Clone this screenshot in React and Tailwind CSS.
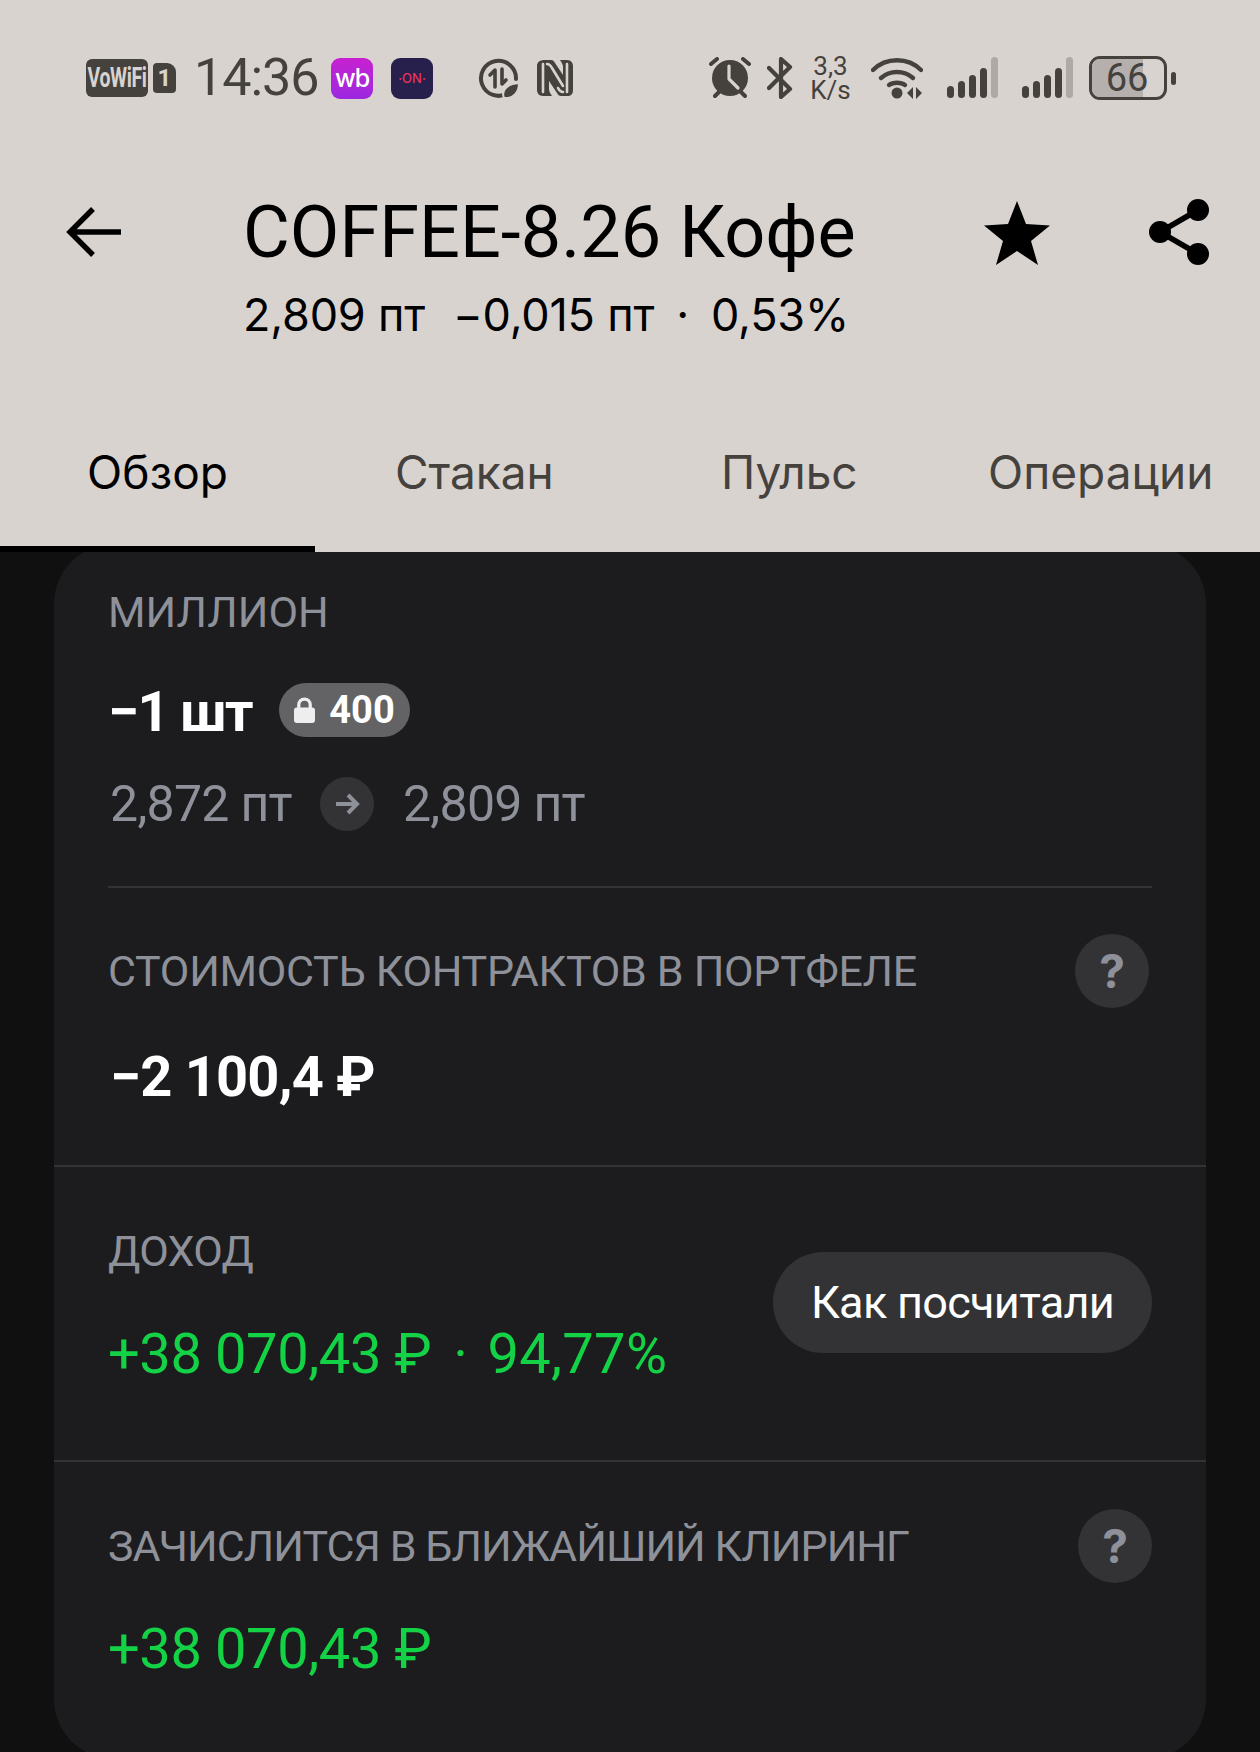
const sans = "font-['Inter','Roboto',sans-serif]";

function VoWiFi() {
  return (
    <div className="flex items-center gap-[5px]">
      <div className="flex h-[38px] w-[62px] items-center justify-center overflow-hidden rounded-[6px] bg-[#45423e]">
        <span className="font-['Roboto',sans-serif] text-[27px] font-bold leading-none tracking-[-0.5px] text-[#d9d3d0] [transform:scaleX(0.72)]">VoWiFi</span>
      </div>
      <div className="flex h-[30px] w-[23px] items-center justify-center rounded-[4px] rounded-tr-[9px] bg-[#45423e]">
        <span className="font-['Roboto',sans-serif] text-[24px] font-bold leading-none text-[#d9d3d0]">1</span>
      </div>
    </div>
  );
}

function DataSaver() {
  return (
    <svg width="42" height="42" viewBox="0 0 42 42" fill="none">
      <path d="M30 36A17.5 17.5 0 1 1 38 22" stroke="#45423e" strokeWidth="4" strokeLinecap="round" />
      <path d="M17 30V13l-5 5" stroke="#45423e" strokeWidth="3.6" strokeLinecap="round" strokeLinejoin="round" />
      <path d="M24 12v15l4-4" stroke="#45423e" strokeWidth="3.6" strokeLinecap="round" strokeLinejoin="round" />
      <path d="M26 41c-3-7 2-14 15-15 0 9-5 16-15 15z" fill="#45423e" stroke="#d9d3d0" strokeWidth="2" />
    </svg>
  );
}

function Nfc() {
  return (
    <svg width="38" height="38" viewBox="0 0 38 38" fill="none">
      <path d="M9 1h6c2 0 3 1 4 3l8 12V8c0-2-1-4-3-7h7c4 0 6 3 6 6v24c0 4-2 6-6 6h-6c-2 0-3-1-4-3l-8-12v8c0 2 1 4 3 7H7c-4 0-6-3-6-6V7c0-4 3-6 8-6z" fill="#45423e" />
      <path d="M7 5v28M11 5c3 0 4 2 5 4l11 18M31 33V5M27 33c-3 0-4-2-5-4" stroke="#d9d3d0" strokeWidth="2.6" strokeLinecap="round" />
    </svg>
  );
}

function Alarm() {
  return (
    <svg width="44" height="42" viewBox="0 0 44 42" fill="none">
      <circle cx="22" cy="21" r="18" fill="#45423e" />
      <path d="M3 7l6-5M41 7l-6-5M7 39l4-4M37 39l-4-4" stroke="#45423e" strokeWidth="4" strokeLinecap="round" />
      <path d="M21 9v13l9 9" stroke="#d9d3d0" strokeWidth="3.2" strokeLinecap="round" strokeLinejoin="round" />
    </svg>
  );
}

function Bluetooth() {
  return (
    <svg width="26" height="42" viewBox="0 0 26 42" fill="none">
      <path d="M2 11l21 21-9 8V2l9 8L2 31" stroke="#45423e" strokeWidth="4.2" strokeLinecap="round" strokeLinejoin="round" />
    </svg>
  );
}

function Wifi() {
  return (
    <svg width="52" height="42" viewBox="0 0 52 42" fill="none">
      <path d="M2 13C15 0 37 0 50 13" stroke="#45423e" strokeWidth="4.4" strokeLinecap="round" />
      <path d="M10 21c9-8 23-8 32 0" stroke="#45423e" strokeWidth="4.4" strokeLinecap="round" />
      <path d="M18 28c4-3 12-3 16 0" stroke="#45423e" strokeWidth="4.4" strokeLinecap="round" />
      <circle cx="26" cy="36" r="5.5" fill="#45423e" />
      <path d="M36 36l6-6v12zM45 30v12l6-6z" fill="#45423e" />
    </svg>
  );
}

function Signal() {
  return (
    <svg width="51" height="42" viewBox="0 0 51 42" fill="none">
      <rect x="0" y="29" width="7" height="12" rx="3.5" fill="#45423e" />
      <rect x="11" y="24" width="7" height="17" rx="3.5" fill="#45423e" />
      <rect x="22" y="18" width="7" height="23" rx="3.5" fill="#45423e" />
      <rect x="33" y="11" width="7" height="30" rx="3.5" fill="#45423e" />
      <rect x="44" y="0" width="7" height="41" rx="3.5" fill="#aea9a6" />
    </svg>
  );
}

function Battery() {
  return (
    <div className="flex items-center gap-[4px]">
      <div className="relative h-[44px] w-[78px] overflow-hidden rounded-[11px] border-[3px] border-[#45423e]">
        <div className="absolute inset-y-0 left-0 w-[51px] bg-[#b5b0ad]" />
        <span className="absolute inset-0 flex items-center justify-center pr-[2px] font-['Roboto',sans-serif] text-[38px] leading-none text-[#45423e]">66</span>
      </div>
      <div className="h-[13px] w-[5px] rounded-full bg-[#45423e]" />
    </div>
  );
}

function StatusBar() {
  return (
    <div className="flex h-[156px] items-center pl-[86px] text-[#45423e]">
      <VoWiFi />
      <span className="ml-[18px] w-[124px] font-['Roboto',sans-serif] text-[52px] font-normal leading-none tracking-[-1px]">14:36</span>
      <div className="ml-[13px] flex h-[41px] w-[42px] items-center justify-center rounded-[9px] bg-gradient-to-b from-[#c81fd0] to-[#9b27e0]">
        <span className="font-['Inter',sans-serif] text-[25px] font-medium leading-none tracking-[-1px] text-white">wb</span>
      </div>
      <div className="ml-[18px] flex h-[41px] w-[42px] items-center justify-center rounded-[9px] bg-[#271f4c]">
        <span className="font-['Inter',sans-serif] text-[13px] font-medium leading-none text-[#e8355a]">·ON·</span>
      </div>
      <div className="ml-[45px]"><DataSaver /></div>
      <div className="ml-[16px]"><Nfc /></div>
      <div className="ml-[134px]"><Alarm /></div>
      <div className="ml-[15px]"><Bluetooth /></div>
      <div className="ml-[15px] flex w-[45px] flex-col items-center font-['Roboto',sans-serif] text-[26px] leading-[24px] text-[#45423e]">
        <span>3,3</span>
        <span>K/s</span>
      </div>
      <div className="ml-[18px]"><Wifi /></div>
      <div className="ml-[24px]"><Signal /></div>
      <div className="ml-[24px]"><Signal /></div>
      <div className="ml-[16px]"><Battery /></div>
    </div>
  );
}

function TitleRow() {
  return (
    <div className="relative mt-[39px] flex items-start pl-[243px] font-['Roboto',sans-serif]">
      <svg className="absolute left-[66px] top-[11px]" width="58" height="52" viewBox="0 0 58 52" fill="none">
        <path d="M27 3L4 26l23 23M4 26h51" stroke="#000" strokeWidth="5.4" />
      </svg>
      <div className="flex flex-col">
        <span className="text-[72px] leading-[76px] text-black">COFFEE-8.26 Кофе</span>
        <span className="mt-[18px] flex font-['Inter',sans-serif] text-[45px] leading-[52px] tracking-[-0.2px] text-black">
          <span>2,809 пт</span>
          <span className="ml-[28px]">−0,015 пт</span>
          <span className="ml-[22px]">·</span>
          <span className="ml-[22px]">0,53%</span>
        </span>
      </div>
      <svg className="absolute left-[983px] top-[5px]" width="68" height="66" viewBox="0 0 68 66">
        <path d="M34 1l9 23 24 1.500-19 15.500 7 24-21-14-21 14 7-24L1 25.500 25 24z" fill="#000" />
      </svg>
      <svg className="absolute left-[1147px] top-[3px]" width="64" height="68" viewBox="0 0 64 68">
        <circle cx="51" cy="12" r="11" fill="#000" />
        <circle cx="51" cy="56" r="11" fill="#000" />
        <circle cx="13" cy="34" r="11" fill="#000" />
        <path d="M51 12L13 34l38 22" stroke="#000" strokeWidth="5.500" fill="none" />
      </svg>
    </div>
  );
}

function Tabs() {
  const items = [
    ["Обзор", "w-[315px] text-black", "pl-[87px]"],
    ["Стакан", "w-[315px] text-[#45423e]", "pl-[80px]"],
    ["Пульс", "w-[315px] text-[#45423e]", "pl-[91px]"],
    ["Операции", "flex-1 text-[#45423e]", "pl-[43px]"],
  ];
  return (
    <div className="mt-auto flex h-[120px] text-[46px] leading-[56px]">
      {items.map(([label, w, pad], i) => (
        <div key={label} className={`relative flex h-full items-center whitespace-nowrap ${w} ${pad}`}>
          <span className="-mt-[40px]">{label}</span>
          {i === 0 && <div className="absolute inset-x-0 bottom-0 h-[6px] bg-black" />}
        </div>
      ))}
    </div>
  );
}

function Help() {
  return (
    <div className="flex h-[74px] w-[74px] shrink-0 items-center justify-center rounded-full bg-[#333336]">
      <span className="font-['Inter',sans-serif] text-[46px] font-bold leading-none text-[#8e9199]">?</span>
    </div>
  );
}

const label = "font-['Roboto',sans-serif] text-[43px] leading-[50px] text-[#8e9199] whitespace-nowrap";
const strong = "font-['Roboto',sans-serif] text-[56px] font-bold leading-[62px] text-white tracking-[-0.8px]";
const green = "font-['Roboto',sans-serif] text-[56px] leading-[62px] text-[#14d246] whitespace-pre tracking-[-0.4px]";

function Card() {
  return (
    <div className="mx-[54px] -mt-[8px] h-[1215px] overflow-hidden rounded-[60px] bg-[#1c1c1e]">
      <div className="px-[54px]">
        <div className="h-[344px] border-b-2 border-[#333336] pt-[43px]">
          <div className={label}>МИЛЛИОН</div>
          <div className="mt-[39px] flex items-center">
            <span className={`${strong} pt-[5px] !tracking-[-1.600px]`}>−1 шт</span>
            <div className="ml-[27px] flex h-[54px] w-[131px] items-center justify-center gap-[14px] rounded-full bg-[#636366]">
              <svg width="21" height="26" viewBox="0 0 22 27" fill="none">
                <path d="M5 12V8a6 6 0 0 1 12 0v4" stroke="#eee" strokeWidth="3.400" />
                <rect x="0" y="11" width="22" height="16" rx="3" fill="#eee" />
              </svg>
              <span className="font-['Roboto',sans-serif] text-[38px] font-bold leading-none text-white">400</span>
            </div>
          </div>
          <div className="mt-[34px] flex items-center pl-[2px] font-['Roboto',sans-serif] text-[50px] leading-[54px] tracking-[-0.7px] text-[#8e9199]">
            <span>2,872 пт</span>
            <div className="ml-[28px] flex h-[54px] w-[54px] items-center justify-center rounded-full bg-[#333336]">
              <svg width="26" height="26" viewBox="0 0 26 26" fill="none">
                <path d="M2 13h21M14 4l9 9-9 9" stroke="#8e9199" strokeWidth="4" />
              </svg>
            </div>
            <span className="ml-[29px]">2,809 пт</span>
          </div>
        </div>
      </div>
      <div className="h-[279px] border-b-2 border-[#333336] pl-[54px] pr-[57px] pt-[46px]">
        <div className="flex items-center justify-between">
          <span className={`${label} tracking-[-0.3px]`}>СТОИМОСТЬ КОНТРАКТОВ В ПОРТФЕЛЕ</span>
          <Help />
        </div>
        <div className={`${strong} mt-[38px] pl-[2px]`}>−2 100,4 ₽</div>
      </div>
      <div className="flex h-[295px] items-start justify-between border-b-2 border-[#333336] px-[54px] pt-[59px]">
        <div className="flex flex-col">
          <span className={`${label} tracking-[-0.7px]`}>ДОХОД</span>
          <span className={`${green} mt-[47px] flex`}>
            <span>+38 070,43 ₽</span>
            <span className="ml-[22px]">·</span>
            <span className="ml-[20px] tracking-[0.300px]">94,77%</span>
          </span>
        </div>
        <div className="mt-[26px] flex h-[101px] w-[379px] items-center justify-center rounded-full bg-[#333336] font-['Roboto',sans-serif] text-[45px] tracking-[-0.7px] text-white">
          Как посчитали
        </div>
      </div>
      <div className="px-[54px] pt-[47px]">
        <div className="flex items-center justify-between">
          <span className={`${label} tracking-[-0.95px]`}>ЗАЧИСЛИТСЯ В БЛИЖАЙШИЙ КЛИРИНГ</span>
          <Help />
        </div>
        <div className={`${green} mt-[35px]`}>+38 070,43 ₽</div>
      </div>
    </div>
  );
}

export default function App() {
  return (
    <div className={`h-[1752px] w-[1260px] overflow-hidden bg-[#101010] ${sans}`}>
      <header className="relative z-10 flex h-[552px] flex-col bg-[#d9d3d0]">
        <StatusBar />
        <TitleRow />
        <Tabs />
      </header>
      <Card />
    </div>
  );
}
